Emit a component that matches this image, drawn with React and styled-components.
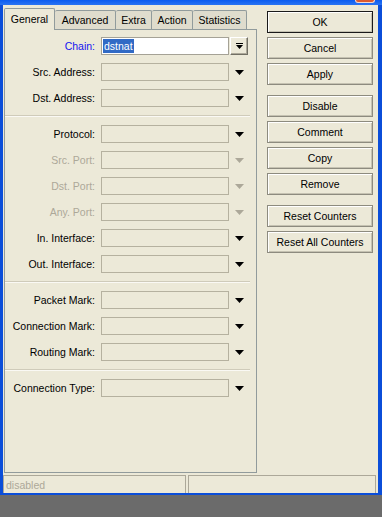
import React from "react";
import styled, { createGlobalStyle } from "styled-components";

const GlobalStyle = createGlobalStyle`
  html, body { margin: 0; padding: 0; background: #6b6b6b; }
  body {
    font-family: "Liberation Sans", Arial, sans-serif;
    font-size: 10.5px;
    color: #000;
  }
  * { box-sizing: border-box; }
`;

const Window = styled.div`
  width: 382px;
  display: flex;
  flex-direction: column;
`;

const TitleStrip = styled.div`
  height: 5px;
  background: linear-gradient(#0b5cf0, #2a74f3);
  display: flex;
  justify-content: flex-end;
  padding-right: 7px;
`;

const CloseNub = styled.div`
  width: 20px;
  height: 3px;
  background: #dc5a30;
  border: 1px solid #f4d8cc;
  border-top: none;
  border-radius: 0 0 3px 3px;
`;

const Frame = styled.div`
  background: #ece9d8;
  border-left: 3px solid #0b4ed9;
  border-right: 4px solid #0b4ed9;
  border-bottom: 2px solid #0b4ed9;
  display: flex;
  flex-direction: column;
`;

const MainRow = styled.div`
  display: flex;
  height: 468px;
  padding-left: 1px;
`;

const TabArea = styled.div`
  width: 253px;
  padding-top: 3px;
  display: flex;
  flex-direction: column;
`;

const TabStrip = styled.div`
  display: flex;
  align-items: flex-end;
  height: 21px;
`;

const Tab = styled.div`
  width: ${(p) => p.$w}px;
  height: ${(p) => (p.$active ? 22 : 19)}px;
  margin-bottom: ${(p) => (p.$active ? -1 : 0)}px;
  position: relative;
  z-index: ${(p) => (p.$active ? 1 : 0)};
  background: ${(p) => (p.$active ? "#ece9d8" : "#dfdccd")};
  border-top: 1px solid #919b9c;
  border-right: 1px solid #919b9c;
  border-left: ${(p) => (p.$first ? "1px solid #919b9c" : "none")};
  border-radius: 2px 2px 0 0;
  display: flex;
  align-items: center;
  justify-content: center;
  padding-bottom: ${(p) => (p.$active ? 2 : 0)}px;
  white-space: nowrap;
`;

const Panel = styled.div`
  height: 444px;
  border: 1px solid #919b9c;
  padding-top: 3px;
  display: flex;
  flex-direction: column;
`;

const Row = styled.div`
  display: flex;
  align-items: center;
  height: 26px;
`;

const Label = styled.div`
  width: 90px;
  margin-right: 6px;
  text-align: right;
  white-space: nowrap;
  color: ${(p) =>
    p.$tone === "link" ? "#1414f0" : p.$tone === "off" ? "#aca899" : "#000"};
`;

const Field = styled.div`
  width: 128px;
  height: 18px;
  border: 1px solid ${(p) => (p.$white ? "#a5a296" : "#b5b19f")};
  background: ${(p) => (p.$white ? "#fff" : "#ece9d8")};
  padding-left: 1px;
  display: flex;
  align-items: center;
`;

const Selected = styled.span`
  background: #316ac5;
  color: #fff;
  height: 14px;
  line-height: 14px;
  padding: 0 1px;
`;

const ArrowCell = styled.div`
  width: 19px;
  margin-left: 1px;
  display: flex;
  justify-content: center;
  align-items: center;
`;

const ChainButton = styled.div`
  width: 18px;
  height: 18px;
  margin-left: 1px;
  border: 1px solid;
  border-color: #fff #716f64 #716f64 #fff;
  box-shadow: inset -1px -1px #aca899;
  display: flex;
  justify-content: center;
  align-items: center;
`;

const Separator = styled.div`
  height: 10px;
  margin-right: 6px;
  display: flex;
  align-items: center;
`;

const SeparatorLine = styled.div`
  flex: 1;
  border-top: 1px solid #cfcbba;
  border-bottom: 1px solid #faf9f4;
`;

const ButtonCol = styled.div`
  width: 106px;
  margin-left: 10px;
  padding-top: 6px;
  display: flex;
  flex-direction: column;
  gap: 10px;
`;

const ButtonGroup = styled.div`
  display: flex;
  flex-direction: column;
  gap: 4px;
`;

const Button = styled.div`
  height: 22px;
  display: flex;
  align-items: center;
  justify-content: center;
  background: #ece9d8;
  border: 1px solid ${(p) => (p.$default ? "#1a1a1a" : "#8d8b7f")};
  box-shadow: inset 1px 1px #fff, inset -1px -1px #c5c2b2;
  white-space: nowrap;
`;

const StatusBar = styled.div`
  display: flex;
  gap: 2px;
  height: 18px;
  margin-top: 2px;
  padding-right: 2px;
`;

const StatusCell = styled.div`
  width: ${(p) => (p.$w ? `${p.$w}px` : "auto")};
  flex: ${(p) => (p.$w ? "none" : 1)};
  border: 1px solid #aca899;
  border-bottom: none;
  color: #aca899;
  padding-left: 2px;
  display: flex;
  align-items: center;
`;

const DownArrow = ({ off }) => (
  <svg width="9" height="5" viewBox="0 0 9 5">
    <polygon points="0,0 9,0 4.5,5" fill={off ? "#aca899" : "#000"} />
  </svg>
);

const ExpandIcon = () => (
  <svg width="7" height="7" viewBox="0 0 7 7">
    <rect x="0" y="0" width="7" height="1" fill="#000" />
    <polygon points="0,2 7,2 3.5,6" fill="#000" />
  </svg>
);

const tabs = [
  { name: "General", w: 51 },
  { name: "Advanced", w: 61 },
  { name: "Extra", w: 36 },
  { name: "Action", w: 41 },
  { name: "Statistics", w: 54 },
];

const groups = [
  [
    { label: "Chain", tone: "link", chain: true },
    { label: "Src. Address" },
    { label: "Dst. Address" },
  ],
  [
    { label: "Protocol" },
    { label: "Src. Port", tone: "off" },
    { label: "Dst. Port", tone: "off" },
    { label: "Any. Port", tone: "off" },
    { label: "In. Interface" },
    { label: "Out. Interface" },
  ],
  [
    { label: "Packet Mark" },
    { label: "Connection Mark" },
    { label: "Routing Mark" },
  ],
  [{ label: "Connection Type" }],
];

const buttonGroups = [
  ["OK", "Cancel", "Apply"],
  ["Disable", "Comment", "Copy", "Remove"],
  ["Reset Counters", "Reset All Counters"],
];

export default function App() {
  return (
    <>
      <GlobalStyle />
      <Window>
        <TitleStrip>
          <CloseNub />
        </TitleStrip>
        <Frame>
          <MainRow>
            <TabArea>
              <TabStrip>
                {tabs.map((t, i) => (
                  <Tab key={t.name} $w={t.w} $active={i === 0} $first={i === 0}>
                    {t.name}
                  </Tab>
                ))}
              </TabStrip>
              <Panel>
                {groups.map((g, gi) => (
                  <React.Fragment key={gi}>
                    {gi > 0 && (
                      <Separator>
                        <SeparatorLine />
                      </Separator>
                    )}
                    {g.map((r) => (
                      <Row key={r.label}>
                        <Label $tone={r.tone}>{r.label}:</Label>
                        {r.chain ? (
                          <>
                            <Field $white>
                              <Selected>dstnat</Selected>
                            </Field>
                            <ChainButton>
                              <ExpandIcon />
                            </ChainButton>
                          </>
                        ) : (
                          <>
                            <Field />
                            <ArrowCell>
                              <DownArrow off={r.tone === "off"} />
                            </ArrowCell>
                          </>
                        )}
                      </Row>
                    ))}
                  </React.Fragment>
                ))}
              </Panel>
            </TabArea>
            <ButtonCol>
              {buttonGroups.map((g, gi) => (
                <ButtonGroup key={gi}>
                  {g.map((b) => (
                    <Button key={b} $default={b === "OK"}>
                      {b}
                    </Button>
                  ))}
                </ButtonGroup>
              ))}
            </ButtonCol>
          </MainRow>
          <StatusBar>
            <StatusCell $w={183}>disabled</StatusCell>
            <StatusCell />
          </StatusBar>
        </Frame>
      </Window>
    </>
  );
}
